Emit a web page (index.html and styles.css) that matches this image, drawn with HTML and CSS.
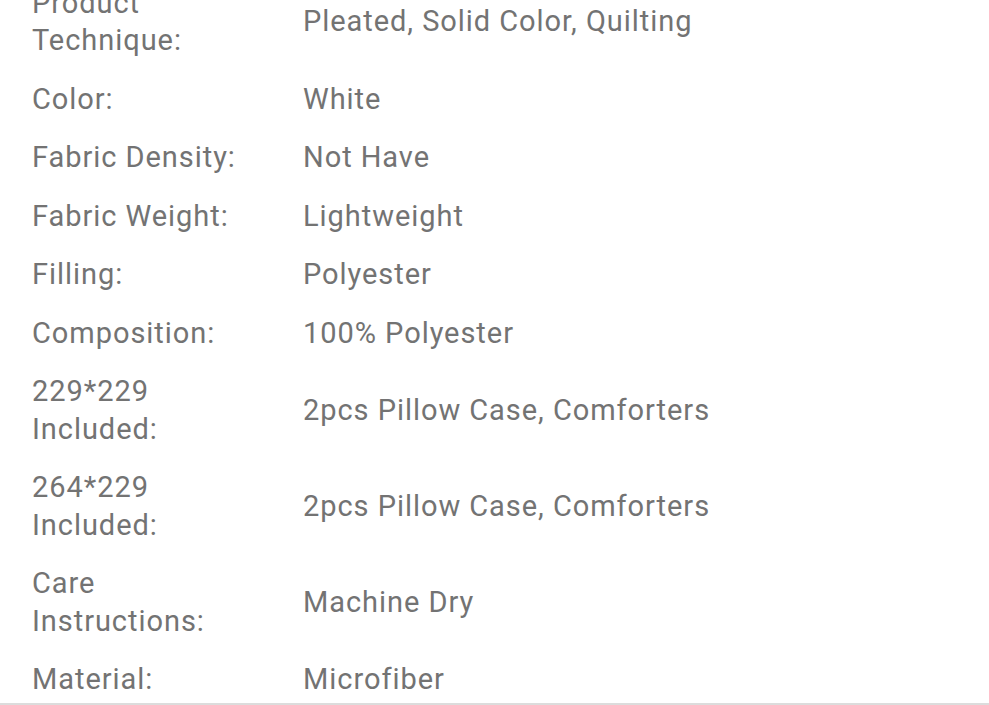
FILE: index.html
```html
<!DOCTYPE html>
<html>
<head>
<meta charset="utf-8">
<link rel="stylesheet" href="styles.css">
</head>
<body>
<div class="specs">
  <div class="row"><div class="label">Product<br>Technique:</div><div class="value">Pleated, Solid Color, Quilting</div></div>
  <div class="row"><div class="label">Color:</div><div class="value">White</div></div>
  <div class="row"><div class="label">Fabric Density:</div><div class="value">Not Have</div></div>
  <div class="row"><div class="label">Fabric Weight:</div><div class="value">Lightweight</div></div>
  <div class="row"><div class="label">Filling:</div><div class="value">Polyester</div></div>
  <div class="row"><div class="label">Composition:</div><div class="value">100% Polyester</div></div>
  <div class="row"><div class="label">229*229<br>Included:</div><div class="value">2pcs Pillow Case, Comforters</div></div>
  <div class="row"><div class="label">264*229<br>Included:</div><div class="value">2pcs Pillow Case, Comforters</div></div>
  <div class="row"><div class="label">Care<br>Instructions:</div><div class="value">Machine Dry</div></div>
  <div class="row"><div class="label">Material:</div><div class="value">Microfiber</div></div>
</div>
<div class="bottom-bar"></div>
</body>
</html>
```
FILE: styles.css
```css
html, body {
  margin: 0;
  padding: 0;
  background: #fff;
  overflow: hidden;
}
body {
  font-family: Roboto, "Liberation Sans", sans-serif;
  font-size: 29px;
  line-height: 37.5px;
  letter-spacing: 0.95px;
  color: #737373;
}
.specs {
  margin-top: -26px;
  padding-left: 32px;
}
.row {
  display: grid;
  grid-template-columns: 271px 1fr;
  align-items: center;
  padding: 10.5px 0;
}
.bottom-bar {
  position: fixed;
  left: 0;
  right: 0;
  bottom: 0;
  height: 2px;
  background: #dcdcdc;
}
```
